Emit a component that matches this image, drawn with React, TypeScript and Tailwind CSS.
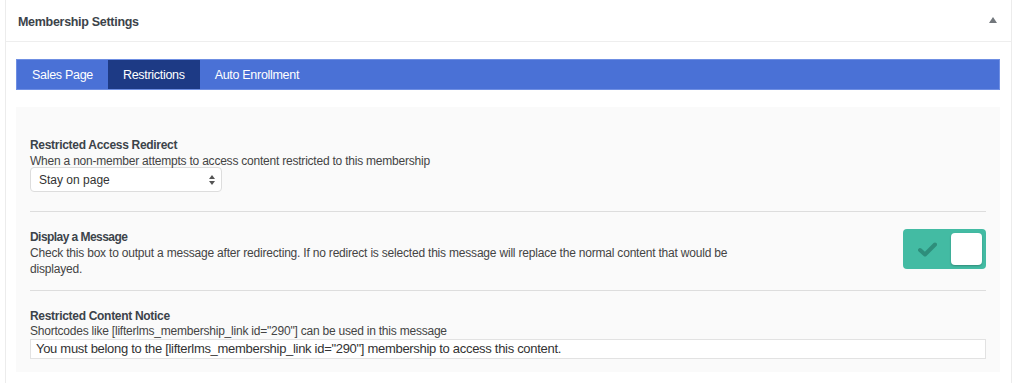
export default function App() {
  return (
    <div className="w-[1024px] h-[383px] bg-white overflow-hidden font-['Liberation_Sans',Arial,sans-serif] text-[#444]">
      <div className="ml-[5px] mr-[12px] h-full border-x border-[#ececec] bg-white">
        <div className="h-[42px] flex items-center justify-between pl-[12px] pr-[14px] pt-[3px] border-b border-[#eeeeee]">
          <h2 className="text-[12.5px] font-bold tracking-[-0.3px] text-[#3c434a]">Membership Settings</h2>
          <svg width="8" height="6" viewBox="0 0 8 6" className="mb-[4px]">
            <path d="M4 0 L8 6 L0 6 Z" fill="#72777c" />
          </svg>
        </div>

        <div className="pl-[10px] pr-[11px] pt-[17px]">
          <div className="flex h-[31px] bg-[#4a71d6] border border-[#6f8fe3] text-[12.5px] tracking-[-0.3px] text-white">
            <div className="flex items-center px-[15px] pt-[1px]">Sales Page</div>
            <div className="flex items-center px-[15px] pt-[1px] bg-[#1d3a85]">Restrictions</div>
            <div className="flex items-center px-[15px] pt-[1px]">Auto Enrollment</div>
          </div>

          <div className="mt-[17px] bg-[#fafafa] px-[14px] pt-[30px] pb-[13px] text-[12px] leading-[16px] tracking-[-0.22px]">
            <div className="pb-[19px] border-b border-[#dddddd]">
              <div className="font-bold tracking-[-0.3px] text-[#3c434a]">Restricted Access Redirect</div>
              <div>When a non-member attempts to access content restricted to this membership</div>
              <div className="mt-[-2px] w-[192px] h-[25px] flex items-center justify-between bg-white border border-[#dddddd] rounded-[4px] pl-[8px] pr-[6px] text-[12px] tracking-normal text-[#333]">
                <span>Stay on page</span>
                <svg width="6" height="10" viewBox="0 0 6 10">
                  <path d="M3 0 L6 4 L0 4 Z M0 6 L6 6 L3 10 Z" fill="#555" />
                </svg>
              </div>
            </div>

            <div className="flex items-start justify-between pt-[17px] pb-[13px] border-b border-[#dddddd]">
              <div className="w-[720px]">
                <div className="font-bold text-[#3c434a] text-[12px] tracking-[-0.55px]">Display a Message</div>
                <div className="text-[12px] tracking-[-0.2px]">
                  Check this box to output a message after redirecting. If no redirect is selected this message will replace the normal content that would be displayed.
                </div>
              </div>
              <div className="w-[83px] h-[40px] rounded-[4px] bg-[#43bba3] flex items-center justify-between pl-[15px] pr-[4px]">
                <svg width="19" height="15" viewBox="0 0 19 15">
                  <path d="M2 8 L7 12.5 L17 2.5" fill="none" stroke="#2e8e7b" strokeWidth="4" strokeLinecap="round" strokeLinejoin="round" />
                </svg>
                <div className="w-[31px] h-[32px] rounded-[4px] bg-white shadow-[0_1px_2px_rgba(0,0,0,0.25)]" />
              </div>
            </div>

            <div className="pt-[17px]">
              <div className="font-bold tracking-[-0.3px] text-[#3c434a]">Restricted Content Notice</div>
              <div className="leading-[15px]">Shortcodes like [lifterlms_membership_link id="290"] can be used in this message</div>
              <div className="h-[20px] flex items-center bg-white border border-[#e2e2e2] px-[5px] text-[13px] tracking-[-0.3px] text-[#333]">
                You must belong to the [lifterlms_membership_link id="290"] membership to access this content.
              </div>
            </div>
          </div>
        </div>
      </div>
    </div>
  );
}
